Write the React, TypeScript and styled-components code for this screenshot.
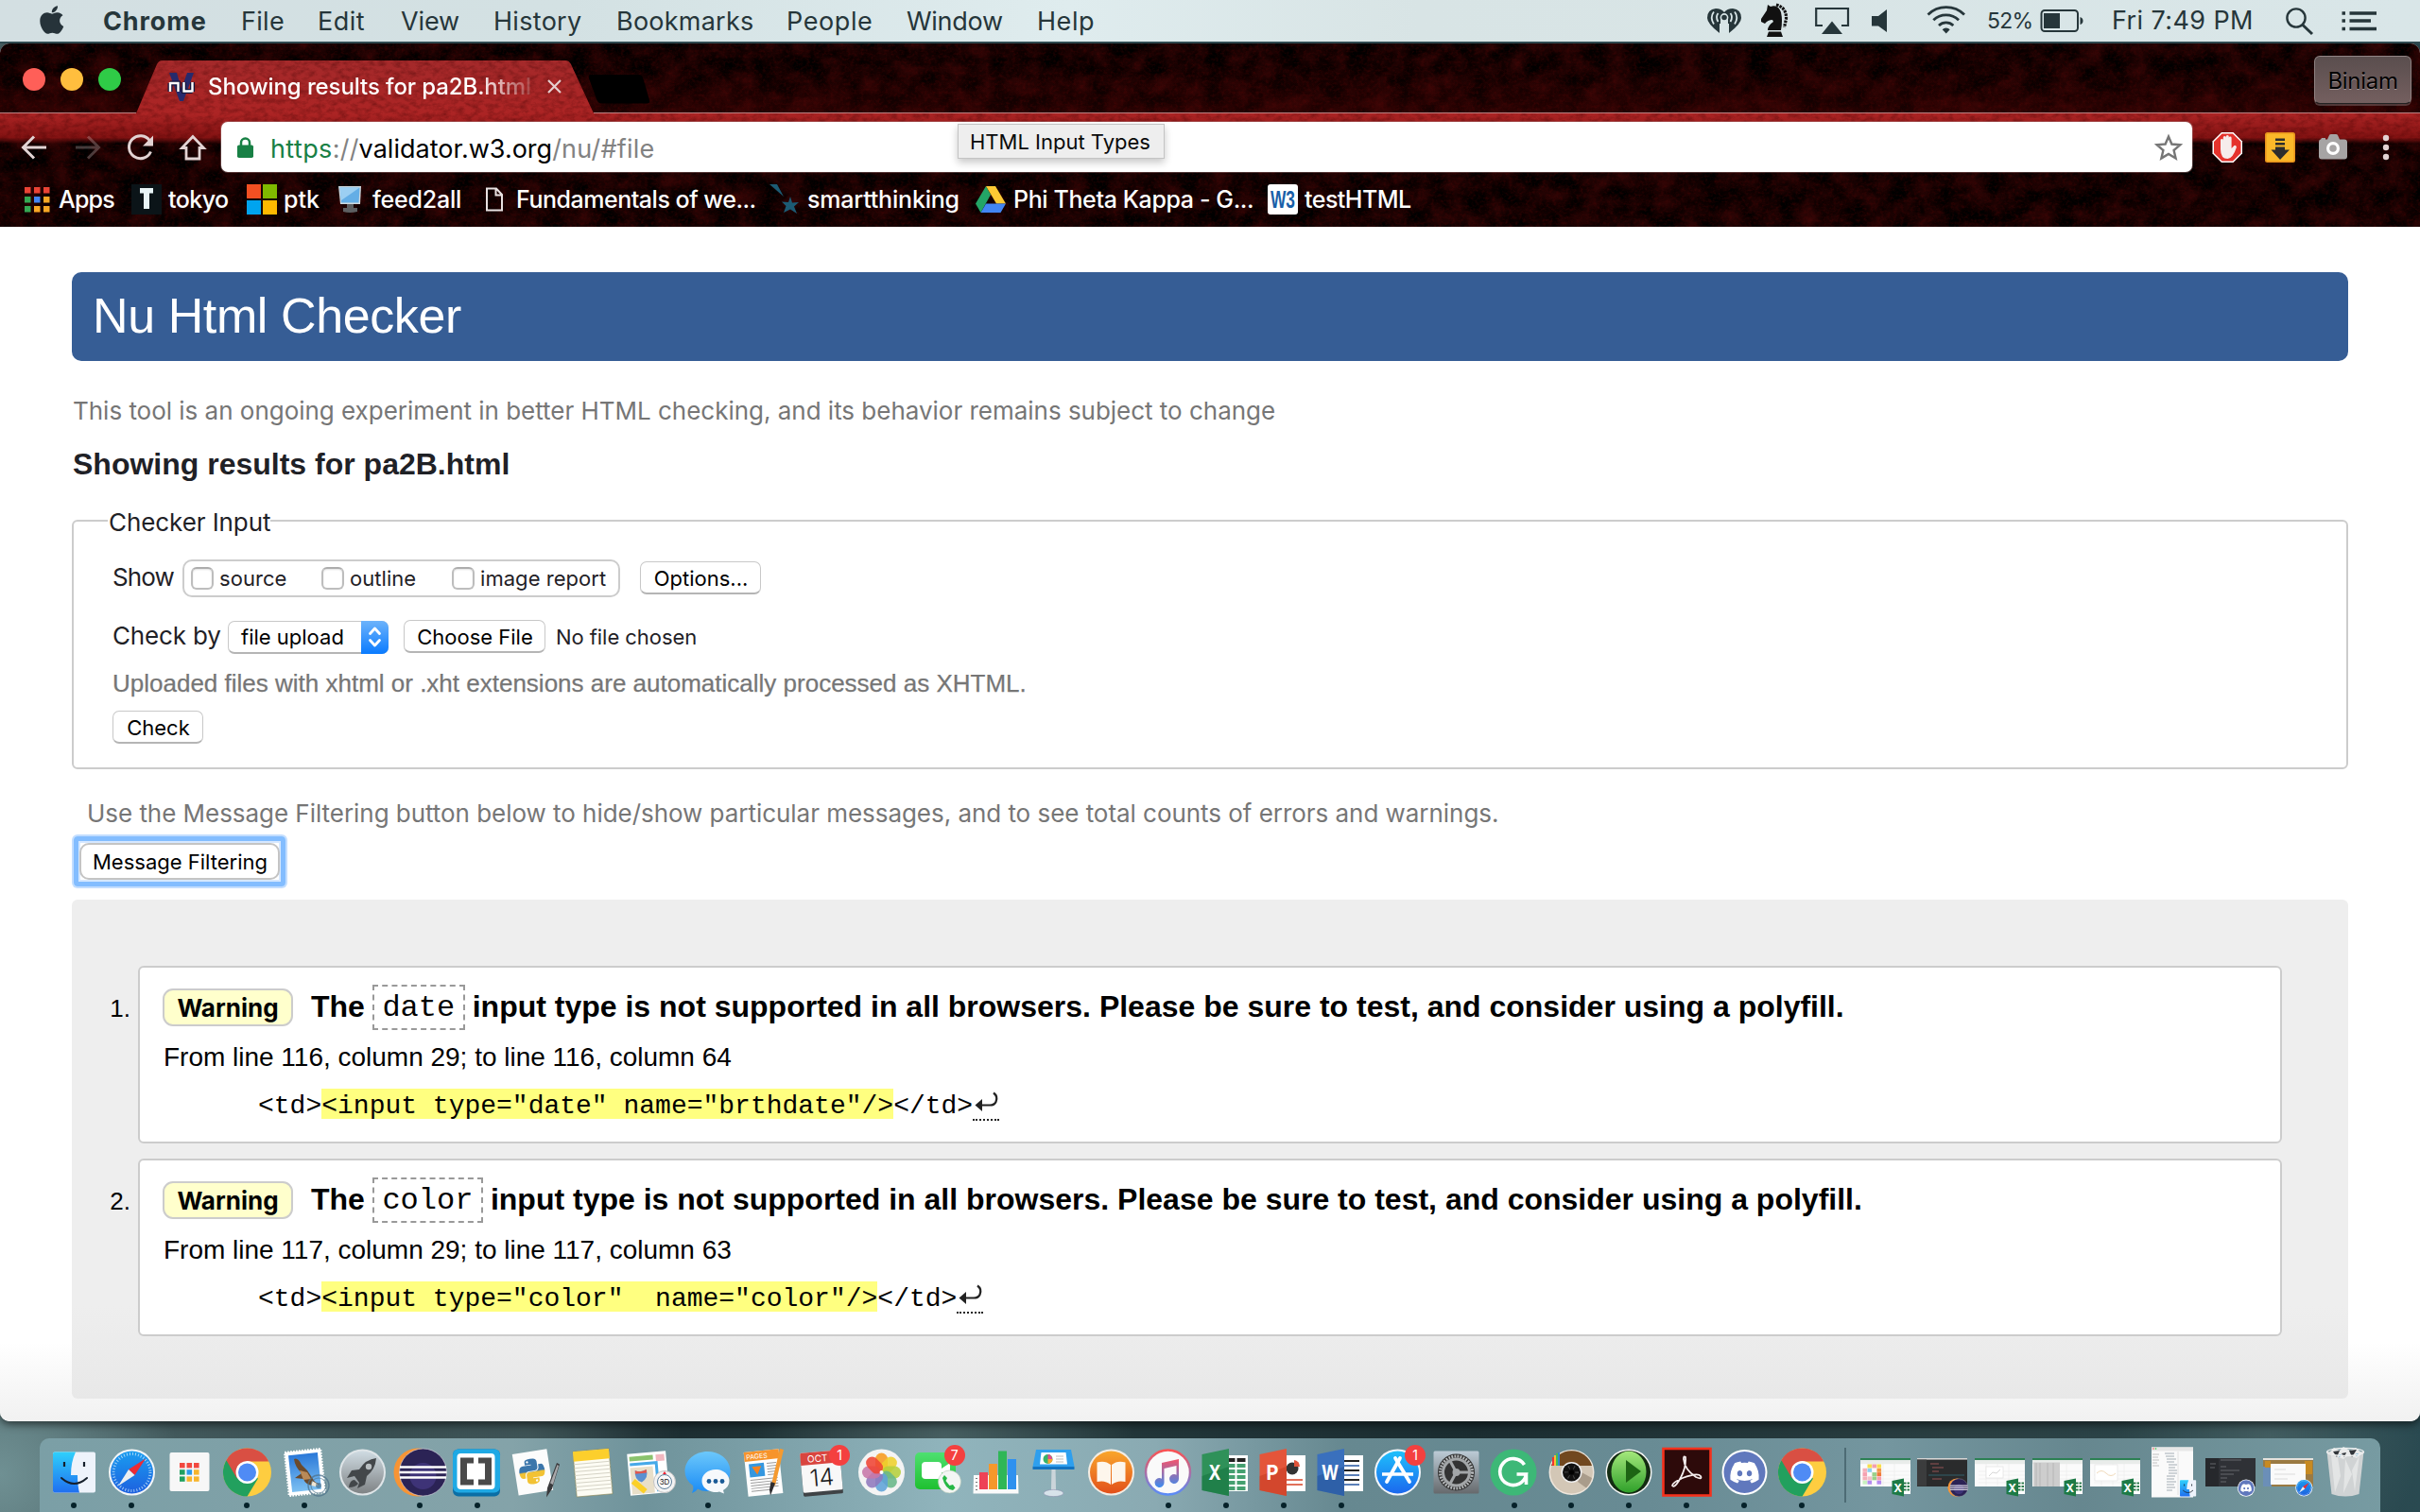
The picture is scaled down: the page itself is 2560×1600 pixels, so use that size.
import React from "react";
import styled, { createGlobalStyle, css } from "styled-components";
import { FaApple, FaDiscord, FaPython } from "react-icons/fa";

const UI = `Inter, "Noto Sans", sans-serif`;
const HELV = `"Liberation Sans", Arial, sans-serif`;
const MONO = `"Liberation Mono", "Courier New", monospace`;

const Global = createGlobalStyle`
  * { box-sizing: border-box; }
  html, body { margin: 0; padding: 0; }
  body { width: 2560px; height: 1600px; overflow: hidden; font-family: ${UI}; color: #1f2126; }
  svg { display: block; flex: none; overflow: visible; }
`;

const Desktop = styled.div`
  width: 2560px;
  height: 1600px;
  display: flex;
  flex-direction: column;
  background:
    radial-gradient(circle at 1000px 1520px, rgba(92, 118, 120, 0.6), transparent 200px),
    radial-gradient(circle at 560px 1520px, rgba(80, 104, 106, 0.5), transparent 160px),
    radial-gradient(circle at 0 1560px, #6f9093, transparent 190px),
    radial-gradient(circle at 2400px 1520px, rgba(90, 115, 116, 0.5), transparent 160px),
    linear-gradient(90deg, #4a6265 0, #34494c 500px, #1c2d31 680px, #263b3e 1000px, #1b2d31 1560px, #2b4043 2100px, #2a4a51 2560px);
`;

/* ---------- macOS menu bar ---------- */

const MenuBar = styled.header`
  height: 44px;
  margin-bottom: 2px;
  flex: none;
  display: flex;
  align-items: center;
  padding: 0 46px 0 42px;
  background: linear-gradient(90deg, #d3dfe2 0, #d3e1e3 600px, #dfecee 1130px, #d8e4e5 1500px, #d9e6e8 2560px);
  box-shadow: 0 2px 0 #2f4a50;
  color: #26363a;
  z-index: 1;
`;

const AppleMark = styled.div`
  width: 67px;
  padding-bottom: 3px;
  color: #26333a;
  flex: none;
`;

const MenuItem = styled.span<{ $w: number; $ls: number; $bold?: boolean }>`
  width: ${(p) => p.$w}px;
  flex: none;
  white-space: nowrap;
  font-size: 27px;
  line-height: 44px;
  padding-top: 1px;
  font-weight: ${(p) => (p.$bold ? 700 : 400)};
  letter-spacing: ${(p) => p.$ls}px;
`;

const StatusArea = styled.div`
  margin-left: auto;
  display: flex;
  align-items: center;
  height: 44px;
`;

const Status = styled.span<{ $gap: number; $w: number }>`
  margin-left: ${(p) => p.$gap}px;
  width: ${(p) => p.$w}px;
  flex: none;
  white-space: nowrap;
`;

const StatusText = styled(Status)<{ $size: number; $ls: number }>`
  font-size: ${(p) => p.$size}px;
  letter-spacing: ${(p) => p.$ls}px;
  line-height: 44px;
`;

/* ---------- browser window ---------- */

const Window = styled.div`
  height: 1458px;
  flex: none;
  display: flex;
  flex-direction: column;
  border-radius: 10px;
  overflow: hidden;
  position: relative;
  background: #fff;
  box-shadow: 0 3px 10px rgba(0, 0, 0, 0.6);
`;

const Chrome = styled.div`
  position: relative;
  height: 194px;
  flex: none;
  border-top: 1px solid #8d7f7f;
  border-bottom: 1px solid #6b5555;
  display: flex;
  flex-direction: column;
`;

const Texture = styled.svg`
  position: absolute;
  left: 0;
  top: -1px;
`;

const TabStrip = styled.div`
  position: relative;
  height: 73px;
  flex: none;
  display: flex;
  padding: 0 9px 0 24px;
`;

const Lights = styled.div`
  display: flex;
  gap: 16px;
  margin: 25px 50px 0 0;
`;

const Light = styled.i<{ $c: string }>`
  width: 24px;
  height: 24px;
  border-radius: 50%;
  background: ${(p) => p.$c};
`;

const Tab = styled.div`
  display: flex;
  align-items: center;
  height: 55px;
  margin-top: 17px;
  color: #fff;
`;

const Favicon = styled.div`
  width: 42px;
  flex: none;
`;

const TabTitle = styled.span`
  width: 348px;
  margin-right: 11px;
  overflow: hidden;
  white-space: nowrap;
  font-size: 24px;
  font-weight: 500;
  line-height: 54px;
  letter-spacing: -0.1px;
  mask-image: linear-gradient(90deg, #000 285px, rgba(0, 0, 0, 0.12) 345px);
`;

const NewTab = styled.div`
  margin: 32px 0 0 28px;
`;

const Profile = styled.div`
  margin: 12px 0 0 auto;
  width: 103px;
  height: 51px;
  border-radius: 6px;
  border: 1px solid rgba(160, 150, 150, 0.7);
  border-bottom-color: #222;
  background: linear-gradient(#5a4e4e, #745f5f);
  box-shadow: 0 2px 0 rgba(120, 110, 110, 0.5);
  color: #000;
  text-shadow: 0 1px 0 rgba(255, 255, 255, 0.4);
  font-size: 24px;
  letter-spacing: -0.3px;
  line-height: 51px;
  text-align: center;
`;

const Toolbar = styled.div`
  position: relative;
  height: 71px;
  flex: none;
  display: flex;
  align-items: center;
`;

const ToolIcon = styled.div<{ $gap: number; $w: number; $dim?: boolean }>`
  margin-left: ${(p) => p.$gap}px;
  width: ${(p) => p.$w}px;
  flex: none;
  opacity: ${(p) => (p.$dim ? 0.28 : 1)};
`;

const Omnibox = styled.div`
  margin-left: 14px;
  width: 2085px;
  height: 53px;
  border-radius: 7px;
  background: #fff;
  box-shadow: 0 0 0 1px rgba(170, 130, 130, 0.4);
  display: flex;
  align-items: center;
  padding: 0 10px 0 17px;
`;

const Url = styled.span`
  margin-left: 18px;
  flex: 1;
  display: flex;
  font-size: 27px;
  line-height: 53px;
  padding-top: 3px;
`;

const UrlPart = styled.span<{ $c?: string; $ls: number }>`
  color: ${(p) => p.$c || "#828282"};
  letter-spacing: ${(p) => p.$ls}px;
`;

const Bookmarks = styled.nav`
  position: relative;
  height: 48px;
  padding-bottom: 8px;
  display: flex;
  align-items: center;
  color: #fff;
`;

const Bookmark = styled.div<{ $gap: number; $w: number }>`
  margin-left: ${(p) => p.$gap}px;
  width: ${(p) => p.$w}px;
  flex: none;
  display: flex;
  align-items: center;
  justify-content: space-between;
`;

const BookmarkText = styled.span<{ $ls: number; $w: number }>`
  width: ${(p) => p.$w}px;
  font-size: 25px;
  font-weight: 500;
  line-height: 38px;
  white-space: nowrap;
  letter-spacing: ${(p) => p.$ls}px;
`;

const Tooltip = styled.div`
  position: absolute;
  left: 1013px;
  top: 85px;
  width: 219px;
  height: 37px;
  background: #eeeeee;
  border: 1px solid #c4c4c4;
  box-shadow: 0 4px 8px rgba(0, 0, 0, 0.22);
  color: #0a0a0a;
  font-size: 22px;
  line-height: 36px;
  padding-left: 12px;
  white-space: nowrap;
`;

/* ---------- validator page ---------- */

const Page = styled.main`
  flex: 1;
  padding: 48px 76px 0;
  background: linear-gradient(#fff 0, #fff 1180px, #f1f1f1 1264px);
  display: flex;
  flex-direction: column;
`;

const Banner = styled.h1`
  margin: 0;
  height: 94px;
  padding-left: 22px;
  border-radius: 10px;
  background: #365d95;
  color: #fff;
  font: 400 52px/93px ${HELV};
  letter-spacing: -0.4px;
`;

const Notice = styled.p`
  margin: 33px 0 0;
  padding-left: 1px;
  color: #767676;
  font-size: 26px;
  line-height: 40px;
  letter-spacing: -0.02px;
  white-space: nowrap;
`;

const ResultTitle = styled.h2`
  margin: 14px 0 0 1px;
  font: 700 32px/44px ${HELV};
`;

const InputSet = styled.fieldset`
  margin: 18px 0 0;
  min-width: 0;
  height: 283px;
  border: 2px solid #ccc;
  border-radius: 6px;
  padding: 21px 41px 0;
`;

const Legend = styled.legend`
  margin-left: -5px;
  padding: 3px 0 0 1px;
  font-size: 26px;
  line-height: 37px;
  letter-spacing: -0.08px;
`;

const Row = styled.div<{ $mt?: number }>`
  display: flex;
  align-items: flex-start;
  margin-top: ${(p) => p.$mt || 0}px;
`;

const RowLabel = styled.span<{ $w: number; $lh: number; $ls?: number }>`
  width: ${(p) => p.$w}px;
  flex: none;
  font-size: 26px;
  line-height: ${(p) => p.$lh}px;
  letter-spacing: ${(p) => p.$ls || 0}px;
  white-space: nowrap;
`;

const CheckGroup = styled.div`
  width: 463px;
  height: 40px;
  border: 2px solid #ccc;
  border-radius: 10px;
  display: flex;
  align-items: center;
  padding-left: 7px;
`;

const CheckLabel = styled.label`
  width: 138px;
  flex: none;
  display: flex;
  align-items: center;
  gap: 6px;
  font-size: 22px;
  line-height: 38px;
  letter-spacing: 0.05px;
  white-space: nowrap;
`;

const Box = styled.i`
  width: 24px;
  height: 24px;
  flex: none;
  border: 2px solid #bdbdbd;
  border-top-color: #adadad;
  border-radius: 6px;
  background: #fff;
  box-shadow: inset 0 1px 2px rgba(0, 0, 0, 0.12);
`;

const macButton = css`
  height: 35px;
  border: 1px solid #c8c8c8;
  border-bottom: 2px solid #b5b5b5;
  border-radius: 7px;
  background: #fff;
  color: #000;
  font-size: 22px;
  line-height: 34px;
  white-space: nowrap;
`;

const Button = styled.div<{ $w: number; $ml?: number; $mt?: number }>`
  ${macButton}
  width: ${(p) => p.$w}px;
  margin: ${(p) => p.$mt || 0}px 0 0 ${(p) => p.$ml || 0}px;
  padding-left: 1px;
  text-align: center;
`;

const Select = styled.div`
  ${macButton}
  width: 170px;
  margin-top: 1px;
  padding-left: 13px;
  line-height: 32px;
  display: flex;
  justify-content: space-between;
`;

const Stepper = styled.span`
  width: 29px;
  height: 35px;
  margin: -1px -1px -2px 0;
  border-radius: 0 7px 7px 0;
  background: linear-gradient(#6db3fb, #0a7bff);
`;

const NoFile = styled.span`
  margin-left: 11px;
  font-size: 22px;
  line-height: 36px;
  letter-spacing: -0.06px;
`;

const Hint = styled.p`
  margin: 13px 0 11px;
  color: #767676;
  font: 400 26px/36px ${HELV};
  -webkit-text-stroke: 0.25px #767676;
`;

const FilterHint = styled.p`
  margin: 27px 0 0 16px;
  color: #767676;
  font-size: 26px;
  line-height: 40px;
  letter-spacing: -0.04px;
  white-space: nowrap;
`;

const FocusRing = styled.div`
  width: 224px;
  height: 53px;
  flex: none;
  margin: 4px 0 14px 2px;
  border: 5px solid #83bdff;
  border-radius: 4px;
  box-shadow: 0 0 0 2px #c3deff, inset 0 0 0 2px #d6e8ff;
  display: flex;
  align-items: center;
  justify-content: center;
`;

const FilterButton = styled.div`
  ${macButton}
  width: 212px;
  height: 39px;
  border: 2px solid #c4c4c4;
  border-radius: 10px;
  line-height: 37px;
  padding-left: 1px;
  text-align: center;
`;

const Results = styled.ol`
  list-style: none;
  margin: 0;
  height: 528px;
  flex: none;
  border-radius: 6px;
  background: linear-gradient(#eee 430px, #e8e8e8);
  padding: 70px 70px 0 0;
  display: flex;
  flex-direction: column;
  gap: 16px;
`;

const ResultItem = styled.li`
  display: flex;
  color: #000;
`;

const Num = styled.span`
  width: 70px;
  flex: none;
  padding-right: 8px;
  text-align: right;
  font: 400 26px/91px ${HELV};
`;

const Card = styled.div`
  flex: 1;
  height: 188px;
  border: 2px solid #ccc;
  border-radius: 6px;
  background: #fff;
  padding: 18px 24px 0;
`;

const TitleRow = styled.div`
  display: flex;
  height: 47px;
  font: 700 32px/46px ${HELV};
  white-space: nowrap;
`;

const Badge = styled.span`
  width: 138px;
  height: 40px;
  margin: 4px 19px 0 0;
  border: 2px solid #ccc;
  border-radius: 11px;
  background: #ffffcc;
  font: 700 26px/37px ${UI};
  text-align: center;
`;

const CodeBox = styled.code`
  margin: 0 8px 0 8px;
  height: 48px;
  border: 2px dashed #999;
  padding: 0 8.5px;
  font: 400 32px/46px ${MONO};
`;

const TitleRest = styled.span`
  letter-spacing: 0;
`;

const Location = styled.p`
  margin: 11px 0 0 1px;
  font: 400 28px/37px ${HELV};
  letter-spacing: -0.01px;
`;

const Extract = styled.pre`
  margin: 15px 0 0 101px;
  height: 34px;
  display: flex;
  font: 400 28px/37px ${MONO};
`;

const Mark = styled.mark`
  height: 32px;
  background: #ffff80;
  color: #000;
`;

const Newline = styled.span`
  width: 28px;
  height: 34px;
  border-bottom: 2px dotted #222;
  padding-top: 3px;
`;

/* ---------- dock ---------- */

const Dock = styled.footer`
  width: 2476px;
  height: 78px;
  margin: 18px 0 0 42px;
  flex: none;
  padding-left: 6px;
  border-radius: 10px 10px 0 0;
  display: flex;
  background: linear-gradient(90deg, #7b9fa6 0, #84a3a9 500px, #6f939b 640px, #90b4bc 960px, #8aaab2 1180px, #668890 1380px, #688b94 1700px, #74969f 1950px, #66878f 2160px, #779ba2 2476px);
`;

const Slot = styled.div`
  position: relative;
  width: 60.93px;
  flex: none;
  display: flex;
  flex-direction: column;
  align-items: center;
`;

const Running = styled.i`
  width: 6px;
  height: 6px;
  border-radius: 50%;
  background: #06222a;
  margin-top: 6px;
`;

const Count = styled.span`
  position: absolute;
  left: 37px;
  top: 7px;
  width: 22px;
  height: 22px;
  border-radius: 50%;
  background: #f4403f;
  color: #fff;
  font-size: 14px;
  line-height: 22px;
  text-align: center;
`;

const Divider = styled.i`
  width: 2px;
  height: 58px;
  margin: 10px 11px 0 14px;
  background: #4d6c75;
`;

/* ---------- drawings ---------- */

const petals = ["#f79a1e", "#eed02b", "#b5cf3c", "#68b789", "#5fa3d8", "#8f79bd", "#c777a8", "#ef4434"];

const Office = ({ color, dark, letter, children }: any) => (
  <g>
    <rect x="28" y="18" width="26" height="38" fill="#fff" />
    {children}
    <path d="M5.500 17L34 11v50L5.500 55z" fill={color} />
    <path d="M5.500 40L34 30v31L5.500 55z" fill={dark} opacity=".5" />
    <text x="19" y="44" fill="#fff" fontFamily={UI} fontWeight="700" fontSize="22" textAnchor="middle" textLength={letter === "W" ? 18 : 13} lengthAdjust="spacingAndGlyphs">{letter}</text>
  </g>
);

const ChromeLogo = () => (
  <g>
    <circle cx="30.500" cy="36" r="25.500" fill="#fecd40" />
    <path d="M30.500 36L8.400 23.200A25.500 25.500 0 0 0 30.500 61.500L42 42.500z" fill="#22a05e" />
    <path d="M8.400 23.200A25.500 25.500 0 0 1 52.600 23.200L53 24.500H30.500L19.500 42.300z" fill="#d94f43" />
    <circle cx="30.500" cy="36" r="12" fill="#fff" />
    <circle cx="30.500" cy="36" r="9.500" fill="#4f8bf5" />
  </g>
);

const FinderLogo = () => (
  <g>
    <rect x="8" y="14.500" width="45" height="43" rx="2" fill="#eef3fb" />
    <path d="M10 14.500H32Q27 25 27 39H34Q34 50 36 57.500H10Q8 57.500 8 55.500V16.500Q8 14.500 10 14.500z" fill="url(#gFinder)" />
    <path d="M20 25v5M41 25v5" stroke="#16202c" strokeWidth="2.200" />
    <path d="M17 42Q30.500 54 44 42" fill="none" stroke="#16202c" strokeWidth="2" strokeLinecap="round" />
  </g>
);

const SafariLogo = () => (
  <g>
    <circle cx="30.500" cy="36" r="24.500" fill="#f3f6f8" />
    <circle cx="30.500" cy="36" r="22.500" fill="url(#gSafari)" />
    <circle cx="30.500" cy="36" r="19.500" fill="none" stroke="#cfeafa" strokeWidth="3" strokeDasharray="1 2.060" opacity=".75" />
    <path d="M45 21.500L27 33l6.500 6z" fill="#ec2b35" />
    <path d="M16 50.500L27 33l6.500 6z" fill="#eceff1" />
  </g>
);

const EclipseLogo = () => (
  <g>
    <circle cx="28" cy="36" r="25.500" fill="#f79434" />
    <circle cx="33.500" cy="36" r="25" fill="#2b2355" stroke="#dfd9e6" strokeWidth=".6" />
    <circle cx="33.500" cy="40" r="14" fill="#473a86" opacity=".7" />
    <path d="M9 30.500h49M8.500 36h50M9 41.500h49" stroke="#fff" strokeWidth="2.600" />
  </g>
);

const DiscordLogo = () => (
  <g>
    <circle cx="30.500" cy="36" r="24" fill="#fff" />
    <circle cx="30.500" cy="36" r="22" fill="#6078bd" />
    <FaDiscord x={14} y={19.5} size={33} color="#fff" />
  </g>
);

type Ico = { d: React.ReactNode; run?: boolean; count?: number };

const dockIcons: Ico[] = [
  { run: true, d: <FinderLogo /> },
  { run: true, d: <SafariLogo /> },
  {
    d: (
      <g>
        <rect x="9.500" y="15" width="42" height="41" rx="2" fill="#f7f7f7" />
        {["#f2483f", "#f2483f", "#f2483f", "#1fa05f", "#2c9be8", "#f7b52c", "#1fa05f", "#f7b52c", "#f7b52c"].map((c, i) => (
          <rect key={i} x={20 + (i % 3) * 7.500} y={26 + Math.floor(i / 3) * 7.200} width="5.600" height="5.400" fill={c} />
        ))}
      </g>
    ),
  },
  { run: true, d: <ChromeLogo /> },
  {
    run: true,
    d: (
      <g>
        <g transform="rotate(-6 30.500 36)">
          <rect x="11.500" y="13" width="38" height="46" fill="#fff" />
          <rect x="11.500" y="13" width="38" height="46" fill="none" stroke="#fff" strokeWidth="2.500" strokeDasharray="1.600 1.400" />
          <rect x="15" y="16.500" width="31" height="39" fill="url(#gSky)" />
        </g>
        <path d="M19 22Q23 20 27 28L33 34L41 46L46 49L39 50Q31 49 29 43L20 42L27 37Q20 30 19 22z" fill="#6b4a2c" />
        <path d="M25 34l8 2 4 7-8 1z" fill="#b98a58" />
        <path d="M38 45l7 4-3 2-5-1z" fill="#f0e6d4" />
        <circle cx="45" cy="50" r="11" fill="none" stroke="#4d7189" strokeWidth="1.400" opacity=".75" />
        <circle cx="45" cy="50" r="8" fill="none" stroke="#4d7189" strokeWidth="1.200" opacity=".6" />
        <circle cx="45" cy="50" r="3" fill="#3d637c" opacity=".6" />
      </g>
    ),
  },
  {
    d: (
      <g>
        <circle cx="30.500" cy="36" r="24.500" fill="#dfe5e8" />
        <circle cx="30.500" cy="36" r="22.500" fill="url(#gSilver)" />
        <path d="M45 21Q34 22 27 33L19 34L14 42L22 40L27 47L25 53L33 49L35 40Q44 33 45 21z" fill="#43474a" />
        <circle cx="37" cy="30" r="3.200" fill="#b9bfc2" />
        <path d="M22 44Q17 44 16 52Q23 52 26 48z" fill="#43474a" />
      </g>
    ),
  },
  { run: true, d: <EclipseLogo /> },
  {
    run: true,
    d: (
      <g>
        <rect x="5" y="11.500" width="50" height="50" rx="6" fill="#0b6ea5" />
        <rect x="5" y="11.500" width="50" height="46" rx="6" fill="#1fa9e4" />
        <rect x="9.500" y="16" width="40" height="38" rx="4" fill="#fff" />
        <path d="M13 20.500h14v6h-7v17h7v6H13zM46 20.500H32v6h7v17h-7v6h14z" fill="#4a4a4a" />
      </g>
    ),
  },
  {
    d: (
      <g>
        <g transform="rotate(-9 28 36)">
          <rect x="10" y="14" width="37" height="44" fill="#fcfcfc" />
          <FaPython x={12.5} y={19.5} size={31} fill="url(#gPy)" />
        </g>
        <path d="M54 26l3 1.500-8 26-6 9 1-10z" fill="#3a3a3c" />
        <path d="M54.500 28l1.500 1-6 20-3-1.500z" fill="#a8a8aa" />
      </g>
    ),
  },
  {
    d: (
      <g transform="rotate(-5 30.500 36)">
        <rect x="12" y="12.500" width="38" height="48" fill="#fdfcf4" stroke="#8d8450" strokeWidth=".6" />
        <path d="M12 26h38M12 30h38M12 34h38M12 38h38M12 42h38M12 46h38M12 50h38M12 54h38" stroke="#d5d3c6" strokeWidth="1" />
        <rect x="12" y="12.500" width="38" height="10.500" fill="#fccf2c" />
      </g>
    ),
  },
  {
    d: (
      <g>
        <g transform="rotate(-5 28 36)">
          <rect x="8" y="15" width="41" height="44" fill="#fff" />
          <rect x="10" y="18" width="25" height="5" fill="#8bc36d" />
          <rect x="38" y="18" width="9" height="7" fill="#f2b8c0" />
          <rect x="10" y="30" width="24" height="28" fill="#e8dfc9" />
          <path d="M10 26.500H38V57" fill="none" stroke="#46a9e8" strokeWidth="3" />
          <path d="M12 44L24 56" stroke="#fbd028" strokeWidth="6" />
          <path d="M15 33q6 3 12 0q2 9-6 13q-8-4-6-13z" fill="#5b90d0" />
          <path d="M15 33q6 3 12 0v3.500h-12z" fill="#e2574c" />
        </g>
        <circle cx="46" cy="46" r="11.500" fill="#f3f3f3" stroke="#c2c2c2" />
        <circle cx="46" cy="46" r="7.500" fill="#fafafa" stroke="#5c7f9b" strokeWidth="1" />
        <text x="46" y="49" fontSize="8" fontFamily={UI} textAnchor="middle" fill="#222">3D</text>
        <path d="M46 35l-2 3h4z" fill="#e23" />
      </g>
    ),
  },
  {
    run: true,
    d: (
      <g>
        <path d="M30.500 14C44 14 54.500 23 54.500 35S44 56 30.500 56Q24 56 20 53.500Q18 57 14 58Q16 54 15 50Q6.500 44 6.500 35C6.500 23 17 14 30.500 14z" fill="url(#gMsg)" />
        <path d="M39 33C47 33 53.500 38 53.500 45Q53.500 51 47 55L48 58.500L43 56.500Q39 57.500 35 56.500C29 55 24.500 51 24.500 45C24.500 38 31 33 39 33z" fill="#f6f9fc" />
        <circle cx="32" cy="45.500" r="2.400" fill="#1b5b97" /><circle cx="39" cy="45.500" r="2.400" fill="#1b5b97" /><circle cx="46" cy="45.500" r="2.400" fill="#1b5b97" />
      </g>
    ),
  },
  {
    d: (
      <g>
        <g transform="rotate(-6 28 36)">
          <rect x="10" y="13" width="37" height="47" fill="#fdfdfd" />
          <rect x="10" y="13" width="37" height="10" fill="#f7942b" />
          <text x="12" y="21" fontSize="7" fontFamily={UI} fill="#fff">PAGES</text>
          <rect x="14" y="26" width="16" height="14" fill="#3497e0" />
          <path d="M17 29h10l-5 9z" fill="#f58220" />
          <path d="M33 27h10M33 30h10M33 33h10M33 36h10M33 39h10M14 43h29M14 46h29M14 49h29M14 52h29M14 55h20" stroke="#9a9a9a" strokeWidth="1" />
        </g>
        <path d="M46 11l4 1-9 38-4-1z" fill="#f59a2f" /><path d="M36.500 46l4.500 1.500-3 8-2 5-1-6z" fill="#2d2d30" />
      </g>
    ),
  },
  {
    count: 1,
    d: (
      <g transform="rotate(-5 30 36)">
        <rect x="8" y="16" width="42" height="44" rx="1.500" fill="#3f4346" />
        <rect x="8" y="14" width="42" height="42" rx="1.500" fill="#f8f8f8" />
        <path d="M9.500 14h39q1.500 0 1.500 1.500V27H8V15.500Q8 14 9.500 14z" fill="#d9453f" />
        <text x="26" y="24.500" fontSize="10" fontFamily={UI} fill="#fff" textAnchor="middle">OCT</text>
        <text x="29" y="50" fontSize="25" fontFamily={UI} fontWeight="300" fill="#1b1b1b" textAnchor="middle">14</text>
      </g>
    ),
  },
  {
    d: (
      <g>
        <circle cx="31.500" cy="36" r="24.500" fill="#f4f4f4" />
        {petals.map((c, i) => (
          <rect key={i} x="25" y="15.500" width="13" height="20" rx="6.500" fill={c} opacity=".88" transform={`rotate(${i * 45} 31.500 36)`} />
        ))}
        <circle cx="31.500" cy="36" r="2" fill="#fff" />
      </g>
    ),
  },
  {
    count: 7,
    d: (
      <g>
        <rect x="6" y="15" width="43" height="39" rx="5" fill="url(#gGreen)" />
        <rect x="13" y="25" width="21" height="18" rx="4" fill="#fff" />
        <path d="M34 32l9-6v16l-9-6z" fill="#fff" />
        <circle cx="42.500" cy="46" r="12" fill="#f4f6f4" stroke="#b4c6b4" strokeWidth=".6" />
        <path d="M37 39l3 3-1.500 3 4 5 3.500-1 2.500 3.500-2.500 2.500Q38 54 35 42z" fill="#27b846" />
      </g>
    ),
  },
  {
    d: (
      <g>
        <path d="M7 39h47l.5 19.500H6.500z" fill="#fafafa" />
        <path d="M10 42v1M10 46v1M10 50v1M10 54v1" stroke="#777" strokeWidth="2" />
        <rect x="13" y="36" width="9" height="18" fill="#ee4256" /><rect x="23" y="27" width="9" height="27" fill="#f6982b" />
        <rect x="33" y="13.500" width="9" height="40.500" fill="#2fb757" /><rect x="43" y="22" width="9" height="32" fill="#2f91ef" />
      </g>
    ),
  },
  {
    d: (
      <g>
        <path d="M28.500 30h4l.6 28h-5.200z" fill="#cbd5da" />
        <ellipse cx="30.500" cy="58" rx="10.500" ry="3.600" fill="#d7e3ea" stroke="#88a" strokeWidth=".5" />
        <path d="M12 12h37l3.500 18h-44z" fill="#2e9fee" /><path d="M8.500 30h44v3h-44z" fill="#1373c0" />
        <path d="M17.500 15h26l1.500 12.500H16z" fill="#fff" />
        <circle cx="24.500" cy="22" r="5" fill="#37b36b" /><path d="M24.500 22v-5a5 5 0 0 1 4.500 6z" fill="#e84b8a" /><path d="M24.500 22h5a5 5 0 0 1-5 5z" fill="#f7a531" />
        <path d="M33 19h8M33 22h8M33 25h8" stroke="#bbb" strokeWidth="1" />
      </g>
    ),
  },
  {
    d: (
      <g>
        <circle cx="30.500" cy="36" r="24.500" fill="#f4ede4" /><circle cx="30.500" cy="36" r="22.500" fill="url(#gOrange)" />
        <path d="M30 28Q24 23 15.500 25.500V46Q24 44 30 49zM31 28Q37 23 45.500 25.500V46Q37 44 31 49z" fill="#fdf6ec" />
      </g>
    ),
  },
  {
    run: true,
    d: (
      <g>
        <circle cx="30.500" cy="36" r="23.500" fill="#fafafa" stroke="url(#gTunes)" strokeWidth="2.500" />
        <path d="M24 26L42 22V43a5 5 0 1 1-2.500-4.300V29L26.500 32V47a5 5 0 1 1-2.500-4.300z" fill="url(#gTunes2)" />
      </g>
    ),
  },
  {
    run: true,
    d: (
      <Office color="#2f9159" dark="#11703b" letter="X">
        {[0, 1, 2, 3, 4, 5].map((r) => (
          <path key={r} d={`M34 ${23 + r * 6}h6.500m2 0h9`} stroke={r ? "#45a070" : "#222"} strokeWidth="4" />
        ))}
      </Office>
    ),
  },
  {
    run: true,
    d: (
      <Office color="#e4553a" dark="#c23a20" letter="P">
        <circle cx="40" cy="32" r="6.500" fill="#333" /><path d="M42 30v-7a7 7 0 0 1 6 7z" fill="#e0543a" />
        <path d="M34 44h17M34 49h17" stroke="#e0705a" strokeWidth="2" />
      </Office>
    ),
  },
  {
    run: true,
    d: (
      <Office color="#3a70bd" dark="#214f93" letter="W">
        <path d="M34 24h16M34 34h16M34 44h16" stroke="#222" strokeWidth="1.800" /><path d="M34 29h16M34 39h16M34 49h16" stroke="#5a7fb8" strokeWidth="1.800" />
      </Office>
    ),
  },
  {
    count: 1,
    d: (
      <g>
        <circle cx="29.500" cy="36" r="24.500" fill="#f3f6fa" /><circle cx="29.500" cy="36" r="22.500" fill="url(#gStore)" />
        <path d="M32 21L18 46" stroke="#fff" strokeWidth="3.800" strokeLinecap="round" /><path d="M27 21L42 46" stroke="#fff" strokeWidth="3.800" strokeLinecap="round" /><path d="M13 38H46" stroke="#fff" strokeWidth="3.400" />
      </g>
    ),
  },
  {
    d: (
      <g>
        <rect x="6.500" y="13.500" width="48" height="45" rx="1.500" fill="url(#gPref)" />
        <circle cx="30.500" cy="36" r="19.500" fill="#333" /><circle cx="30.500" cy="36" r="17" fill="none" stroke="#b5b8ba" strokeWidth="3" strokeDasharray="1.800 1.300" />
        <circle cx="30.500" cy="36" r="14" fill="none" stroke="#a3a6a8" strokeWidth="3" />
        <path d="M30.500 36L24 24M30.500 36L24 48M30.500 36H44" stroke="#a3a6a8" strokeWidth="3" /><circle cx="30.500" cy="36" r="4" fill="#a3a6a8" />
      </g>
    ),
  },
  {
    run: true,
    d: (
      <g>
        <circle cx="30" cy="36" r="24.500" fill="#3db877" />
        <path d="M41.500 28A14 14 0 1 0 43.500 38H33.500M43.500 37v12" fill="none" stroke="#fff" strokeWidth="3.600" />
      </g>
    ),
  },
  {
    run: true,
    d: (
      <g>
        <circle cx="30.500" cy="36" r="24" fill="#eee6dc" /><circle cx="30.500" cy="36" r="22.500" fill="#d3c7b6" />
        <path d="M9 29A22.500 22.500 0 0 1 52 29z" fill="#71481f" />
        <path d="M37 46L46 52.500A22.500 22.500 0 0 0 52 42L41 36z" fill="#a99c8b" />
        <path d="M11 20v9" stroke="#e33" strokeWidth="2" /><path d="M13 18v11" stroke="#fb3" strokeWidth="2" /><path d="M15 16v13" stroke="#4b5" strokeWidth="2" /><path d="M17 15v14" stroke="#38c" strokeWidth="2" />
        <circle cx="30.500" cy="36" r="11" fill="#efefef" /><circle cx="30.500" cy="36" r="9.500" fill="#111" />
        <circle cx="30.500" cy="36" r="5.500" fill="none" stroke="#444" strokeWidth="4" strokeDasharray="1 4.500" /><circle cx="30.500" cy="36" r="2.500" fill="#000" />
      </g>
    ),
  },
  {
    run: true,
    d: (
      <g>
        <circle cx="30" cy="36" r="24.500" fill="#f5f5f5" /><circle cx="30" cy="36" r="23" fill="#132c12" /><ellipse cx="30" cy="35.500" rx="18.500" ry="22" fill="url(#gCam)" />
        <path d="M27 23L43 35L27 47z" fill="#1d6414" />
      </g>
    ),
  },
  {
    run: true,
    d: (
      <g>
        <rect x="5.500" y="11" width="50" height="49.500" fill="#2d0a0a" stroke="#f5311c" strokeWidth="2.600" />
        <path d="M29 20Q27 18 27 22Q28 33 40 41Q47 44 45 40Q42 36 26 42Q15 47 15 50Q17 53 22 45Q30 32 29 20z" fill="none" stroke="#f5eeee" strokeWidth="1.800" />
      </g>
    ),
  },
  { run: true, d: <DiscordLogo /> },
  { run: true, d: <ChromeLogo /> },
];

const MiniExcel = () => (
  <g>
    <rect x="46" y="45" width="11" height="14" fill="#fff" />
    <path d="M50 47.500h6M50 51h6M50 54.500h6" stroke="#2c7a4c" strokeWidth="2" strokeDasharray="2.500 1" />
    <path d="M37.500 45L50 42.500v19L37.500 59z" fill="#1d7a45" />
    <text x="43.700" y="56.500" fontSize="12" fontWeight="700" fontFamily={UI} fill="#fff" textAnchor="middle">X</text>
  </g>
);

const Sheet = ({ children }: { children?: React.ReactNode }) => (
  <g>
    <rect x="4" y="21" width="53" height="30" fill="#fbfbfb" />
    <rect x="4" y="21" width="53" height="2.200" fill="#2c8053" />
    <rect x="4" y="23.200" width="53" height="4" fill="#e9ecea" />
    <path d="M8 35h49M8 39h49M8 43h49M8 47h49M16 27v24M28 27v24M40 27v24" stroke="#e6e6e6" strokeWidth=".5" />
    {children}
    <MiniExcel />
  </g>
);

const blocks = ["#fbfbfb", "#f7e04a", "#f3a0ae", "#f7e04a", "#f6b0b8", "#8fd0f0", "#fbfbfb", "#f29a4a", "#f6a0b0", "#fbfbfb", "#9ad08a", "#f07a3a", "#f6b0b8", "#f6c0c8", "#9ad08a", "#f6a0b0", "#c9f0c0", "#b58af0", "#fbfbfb", "#b58af0"];

const thumbs: React.ReactNode[] = [
  <Sheet>{blocks.map((c, i) => <rect key={i} x={6.500 + (i % 4) * 5} y={27.500 + Math.floor(i / 4) * 4.300} width="4.600" height="4" fill={c} />)}</Sheet>,
  <g>
    <rect x="4" y="21" width="53" height="30" fill="#2a2b2c" />
    <rect x="4" y="21" width="53" height="1.600" fill="#d5d5d5" />
    <rect x="4" y="22.600" width="10" height="28" fill="#3b3c3d" />
    <path d="M18 27h9M20 31h12M20 35h7M20 43h10" stroke="#a05a5a" strokeWidth=".9" /><path d="M16 39h38" stroke="#31606a" strokeWidth="1" />
    <g transform="translate(35.500 38.500) scale(.38)"><EclipseLogo /></g>
  </g>,
  <Sheet><rect x="16" y="30" width="18" height="12" fill="#fff" stroke="#ddd" strokeWidth=".6" /><path d="M19 40l4-4 4 1 4-4" stroke="#bbb" fill="none" strokeWidth=".6" /></Sheet>,
  <Sheet><rect x="5" y="25.500" width="28" height="25.500" fill="#cdcdcd" /><path d="M8 26v25M12 26v25M20 26v25M26 26v25" stroke="#b0b0b0" strokeWidth=".8" /></Sheet>,
  <Sheet><rect x="9" y="28" width="24" height="17" fill="#fff" stroke="#e2e2e2" strokeWidth=".6" /><path d="M11 37q5-5 10 0t10 0" stroke="#ecd0a8" fill="none" strokeWidth=".8" /></Sheet>,
  <g>
    <rect x="8" y="9.500" width="44" height="53" fill="#fafafa" />
    <rect x="8" y="9.500" width="44" height="4" fill="#e7e7e7" />
    <circle cx="10" cy="11" r=".8" fill="#f55" /><circle cx="12.500" cy="11" r=".8" fill="#3c4" />
    <path d="M9 17h7M9 20h6M9 23h7M9 26h5M9 29h7" stroke="#bbb" strokeWidth=".9" />
    <path d="M22 16h10M23 19h9M24 22h10M24 25h8M26 28h9M26 31h7M26 34h9M26 37h9M24 40h9M24 43h8M24 46h10M24 49h8M24 52h9M24 55h6" stroke="#9aa5ad" strokeWidth=".9" />
    <path d="M36 14v46" stroke="#ddd" strokeWidth=".8" />
    <g transform="translate(35 38.500) scale(.38 .4)"><FinderLogo /></g>
  </g>,
  <g>
    <rect x="4" y="21" width="53" height="30" fill="#2f3136" /><rect x="4" y="21" width="14" height="30" fill="#26282c" />
    <path d="M20 23h22M9 27h6M9 31h5M20 30h6M20 34h20M20 38h14M20 42h7M20 46h6" stroke="#73767c" strokeWidth=".8" />
    <g transform="translate(35.500 39) scale(.38)"><DiscordLogo /></g>
  </g>,
  <g>
    <rect x="4" y="21" width="53" height="30" fill="#9b7a42" /><path d="M4 30h9v21H4z" fill="#6b8fb8" /><path d="M6 24h6v7H6zM48 24h8v14h-8z" fill="#c78a22" />
    <rect x="4" y="21" width="53" height="2" fill="#e5e2dd" />
    <rect x="12" y="27" width="37" height="22" fill="#fafafa" /><path d="M16 33h12M16 38h22M16 43h14" stroke="#dcdcdc" strokeWidth="1" />
    <g transform="translate(36 39) scale(.37)"><SafariLogo /></g>
  </g>,
  <g>
    <path d="M10.500 14L15.500 59Q30 64 44.500 59L49.500 14z" fill="#d0d3d4" />
    <path d="M15 18L19 57L25 40L22 20zM30 22l-2 36 9-20zM45 18l-5 38-3-22z" fill="#e6e7e7" opacity=".85" />
    <path d="M13 15L18 10L24 13L28 9L35 13L41 10L48 16L42 21L33 18L28 22L20 19z" fill="#e9eaea" />
    <path d="M17 14l4 6 3-7zM34 13l3 7 5-8zM26 16l3 4 2-5z" fill="#31353a" />
    <path d="M22 18l2 2 2-3zM40 17l2 2 2-3z" fill="#4b9bc8" />
    <ellipse cx="30" cy="14.500" rx="19.500" ry="4" fill="none" stroke="#eef0f0" strokeWidth="1.300" />
  </g>,
];

const Gradient = ({ id, a, b, mid }: { id: string; a: string; b: string; mid?: boolean }) => (
  <linearGradient id={id} x1="0" y1="0" x2="0" y2="1">
    <stop offset={mid ? 0.48 : 0} stopColor={a} />
    <stop offset={mid ? 0.54 : 1} stopColor={b} />
  </linearGradient>
);

const ThemeTexture = () => (
  <Texture width="2560" height="194" viewBox="0 46 2560 194">
    <defs>
      <filter id="grain" x="0" y="0" width="100%" height="100%" colorInterpolationFilters="sRGB">
        <feTurbulence type="fractalNoise" baseFrequency="0.04 0.05" numOctaves="6" seed="4" />
        <feColorMatrix values="0.32 0 0 0 -0.085  0.04 0 0 0 -0.016  0.04 0 0 0 -0.016  0 0 0 0 1" />
      </filter>
      <filter id="speck" x="0" y="0" width="100%" height="100%" colorInterpolationFilters="sRGB">
        <feTurbulence type="fractalNoise" baseFrequency="0.28 0.34" numOctaves="3" seed="12" />
        <feColorMatrix values="0 0 0 0 0.32  0 0 0 0 0.02  0 0 0 0 0.02  1.5 0 0 0 -0.66" />
      </filter>
      <filter id="shade" x="0" y="0" width="100%" height="100%" colorInterpolationFilters="sRGB">
        <feTurbulence type="fractalNoise" baseFrequency="0.12 0.2" numOctaves="5" seed="9" />
        <feColorMatrix values="0 0 0 0 0.22  0 0 0 0 0  0 0 0 0 0  1.6 0 0 0 -0.62" />
      </filter>
      <linearGradient id="band" gradientUnits="userSpaceOnUse" x1="0" y1="60" x2="0" y2="152">
        <stop offset="0" stopColor="#a42a2b" />
        <stop offset=".66" stopColor="#ac2424" />
        <stop offset=".93" stopColor="#821212" />
        <stop offset="1" stopColor="#821212" stopOpacity="0" />
      </linearGradient>
      <linearGradient id="glow" gradientUnits="userSpaceOnUse" x1="0" y1="70" x2="0" y2="120">
        <stop offset="0" stopColor="#6a0606" stopOpacity="0" />
        <stop offset="1" stopColor="#6a0606" stopOpacity=".25" />
      </linearGradient>
      <clipPath id="redShape">
        <path d="M0 120H144L166 68Q168 64 172 64H598Q602 64 604 68L628 120H2560V154H0z" />
      </clipPath>
    </defs>
    <rect y="46" width="2560" height="194" filter="url(#grain)" />
    <rect y="46" width="2560" height="194" filter="url(#speck)" opacity=".6" />
    <rect y="70" width="2560" height="50" fill="url(#glow)" />
    <g clipPath="url(#redShape)">
      <rect y="60" width="2560" height="94" fill="url(#band)" />
      <rect y="60" width="2560" height="88" filter="url(#shade)" opacity=".45" />
    </g>
    <path d="M0 119.500H144M628 119.500H2560" stroke="#b98080" strokeWidth="1.200" />
  </Texture>
);

const messages = [
  { n: "1.", type: "date", loc: "From line 116, column 29; to line 116, column 64", code: `<input type="date" name="brthdate"/>` },
  { n: "2.", type: "color", loc: "From line 117, column 29; to line 117, column 63", code: `<input type="color"  name="color"/>` },
];

export default function App() {
  return (
    <Desktop>
      <Global />
      <svg width="0" height="0">
        <defs>
          <Gradient id="gFinder" a="#2fd0fb" b="#1f6ff0" />
          <Gradient id="gSafari" a="#1a9df0" b="#1d60df" />
          <Gradient id="gSky" a="#2a78d8" b="#7cc0f2" />
          <Gradient id="gSilver" a="#cfdbe2" b="#7f8385" />
          <Gradient id="gPy" a="#3b76ab" b="#f2c234" mid />
          <Gradient id="gMsg" a="#6cc8fb" b="#1a8bf5" />
          <Gradient id="gGreen" a="#4ee070" b="#1fc030" />
          <Gradient id="gOrange" a="#f9a62c" b="#e2501a" />
          <Gradient id="gTunes" a="#fb5252" b="#5a8cf8" />
          <Gradient id="gTunes2" a="#f5536b" b="#3d8cf0" />
          <Gradient id="gStore" a="#1fc0fb" b="#1b68ee" />
          <Gradient id="gPref" a="#bccbd6" b="#66696c" />
          <Gradient id="gCam" a="#a5e87c" b="#2fa02a" />
        </defs>
      </svg>

      <MenuBar>
        <AppleMark><FaApple size={34} viewBox="64 0 384 512" /></AppleMark>
        <MenuItem $w={146} $ls={0.9} $bold>Chrome</MenuItem>
        <MenuItem $w={81} $ls={0.3}>File</MenuItem>
        <MenuItem $w={88} $ls={0.5}>Edit</MenuItem>
        <MenuItem $w={98} $ls={-0.1}>View</MenuItem>
        <MenuItem $w={130} $ls={0.3}>History</MenuItem>
        <MenuItem $w={180} $ls={0.24}>Bookmarks</MenuItem>
        <MenuItem $w={127} $ls={0.58}>People</MenuItem>
        <MenuItem $w={138} $ls={-0.26}>Window</MenuItem>
        <MenuItem $w={70} $ls={0.55}>Help</MenuItem>
        <StatusArea>
          <Status $gap={0} $w={36}>
            <svg width="36" height="44" viewBox="1806 0 36 44" fill="#26363a">
              <path d="M1815 9Q1821 9 1824 13Q1827 9 1833 9Q1842 10 1842 19Q1842 25 1829 35V25H1828V20H1820V25H1819V35Q1806 25 1806 19Q1806 10 1815 9z" />
              <path d="M1817.500 14q-3 4 0 9M1830.500 14q3 4 0 9M1813 12.500q-4.500 6 0 13M1835 12.500q4.500 6 0 13" fill="none" stroke="#d9e6e8" strokeWidth="1.800" />
              <circle cx="1824" cy="18.500" r="3.600" fill="#26363a" stroke="#d9e6e8" strokeWidth="1.600" />
              <path d="M1821 25h6v10h-6z" fill="#d9e6e8" />
            </svg>
          </Status>
          <Status $gap={20} $w={30}>
            <svg width="30" height="44" viewBox="1862 0 30 44" fill="#111">
              <path d="M1870 5L1873 7Q1881 4 1884 13Q1886 22 1884 32H1870Q1870 27 1876 23L1875 21Q1870 21 1867 25L1863 23L1863 20L1869 11z" />
              <path d="M1879 5Q1890 8 1889.500 20L1887.500 29" fill="none" stroke="#111" strokeWidth="3.200" strokeDasharray="2.600 1" />
              <path d="M1871 33.500H1884L1886 39H1869z" />
            </svg>
          </Status>
          <Status $gap={28} $w={36}>
            <svg width="36" height="44" viewBox="1920 0 36 44" fill="none" stroke="#26363a" strokeWidth="2.200">
              <path d="M1928 27H1921.200V9H1955V27H1948" />
              <path d="M1938 22.500L1949 36H1927z" fill="#26363a" stroke="none" />
            </svg>
          </Status>
          <Status $gap={24} $w={17}>
            <svg width="17" height="44" viewBox="1980 0 17 44" fill="#26363a">
              <path d="M1980 17H1987L1996 10V34L1987 27.500H1980z" />
            </svg>
          </Status>
          <Status $gap={41} $w={41}>
            <svg width="41" height="44" viewBox="2038 0 41 44" fill="none" stroke="#26363a" strokeWidth="2.800">
              <path d="M2039.500 15.500A27.500 27.500 0 0 1 2078 15.500M2045.300 21.300A19 19 0 0 1 2072 21.300M2051 27A11 11 0 0 1 2066.300 27" />
              <path d="M2058.700 35.500l-4-4.200a5.600 5.600 0 0 1 8 0z" fill="#26363a" stroke="none" />
            </svg>
          </Status>
          <StatusText $gap={23} $w={48} $size={23} $ls={-0.7}>52%</StatusText>
          <Status $gap={8} $w={46}>
            <svg width="46" height="44" viewBox="2158 0 46 44" fill="none" stroke="#26363a" strokeWidth="2">
              <rect x="2159.500" y="11" width="38.500" height="22" rx="3.500" />
              <rect x="2162" y="14" width="17" height="16" fill="#26363a" stroke="none" />
              <path d="M2200.500 18Q2203.500 19 2203.500 22T2200.500 26z" fill="#26363a" stroke="none" />
            </svg>
          </Status>
          <StatusText $gap={30} $w={148} $size={27} $ls={0.4}>Fri 7:49 PM</StatusText>
          <Status $gap={36} $w={28}>
            <svg width="28" height="44" viewBox="2418 0 28 44" fill="none" stroke="#26363a" strokeWidth="2.400">
              <circle cx="2429" cy="19" r="9.600" />
              <path d="M2435.500 26L2446 36" strokeWidth="3" />
            </svg>
          </Status>
          <Status $gap={31} $w={37}>
            <svg width="37" height="44" viewBox="2477 0 37 44" stroke="#26363a" strokeWidth="3.400">
              <path d="M2477.500 14h3.500M2477.500 22h3.500M2477.500 30.500h3.500M2485.500 14H2514M2485.500 22H2508M2485.500 30.500H2514" />
            </svg>
          </Status>
        </StatusArea>
      </MenuBar>

      <Window>
        <Chrome>
          <ThemeTexture />
          <TabStrip>
            <Lights>
              <Light $c="#ff5f58" />
              <Light $c="#ffbe3e" />
              <Light $c="#2fcb47" />
            </Lights>
            <Tab>
              <Favicon>
                <svg width="28" height="30" viewBox="0 0 28 30">
                  <path d="M1 0H9L14 17L20 0H27L16 30H12z" fill="#262a6c" />
                  <path d="M2 20V11M2 11H10.500V20M16.500 10V19.500H25.500M25.500 10V20" fill="none" stroke="#15153a" strokeWidth="5" />
                  <path d="M2 20V10M2 11H10.500V20M16.500 10V19.500H25.500M25.500 10V20.500" fill="none" stroke="#fff" strokeWidth="2.400" />
                </svg>
              </Favicon>
              <TabTitle>Showing results for pa2B.html</TabTitle>
              <svg width="15" height="15" viewBox="0 0 15 15" stroke="#e6cfcf" strokeWidth="2.200">
                <path d="M1 1L14 14M14 1L1 14" />
              </svg>
            </Tab>
            <NewTab>
              <svg width="66" height="31" viewBox="0 0 66 31"><path d="M3 0H54Q57 0 58 3L65 27Q66 30.500 62 30.500H15Q11 30.500 9.500 27L1 4Q0 0 3 0z" fill="#000" /></svg>
            </NewTab>
            <Profile>Biniam</Profile>
          </TabStrip>
          <Toolbar>
            <ToolIcon $gap={20} $w={32}>
              <svg width="32" height="30" viewBox="20 141 32 30" fill="none" stroke="#e2d3d3" strokeWidth="3"><path d="M49 156H25M36 144.500L24.500 156L36 167.500" /></svg>
            </ToolIcon>
            <ToolIcon $gap={25} $w={32} $dim>
              <svg width="32" height="30" viewBox="77 141 32 30" fill="none" stroke="#e2d3d3" strokeWidth="3"><path d="M80 156H104M93 144.500L104.500 156L93 167.500" /></svg>
            </ToolIcon>
            <ToolIcon $gap={23} $w={33}>
              <svg width="33" height="30" viewBox="132 141 33 30" fill="none" stroke="#e2d3d3" strokeWidth="3"><path d="M158.500 149A12 12 0 1 0 159.500 160.500" /><path d="M162 143.500V154.500H151z" fill="#e2d3d3" stroke="none" /></svg>
            </ToolIcon>
            <ToolIcon $gap={23} $w={32}>
              <svg width="32" height="30" viewBox="188 141 32 30" fill="none" stroke="#e2d3d3" strokeWidth="2.800"><path d="M204 144.500L192.500 156.500H197V168H211V156.500H215.500z" /></svg>
            </ToolIcon>
            <Omnibox>
              <svg width="17" height="22" viewBox="0 0 17 22"><rect y="8.500" width="17" height="13.500" rx="1.800" fill="#188045" /><path d="M4 9V6A4.500 4.500 0 0 1 13 6V9" fill="none" stroke="#188045" strokeWidth="2.500" /></svg>
              <Url>
                <UrlPart $c="#188045" $ls={0.4}>https</UrlPart>
                <UrlPart $ls={0.2}>://</UrlPart>
                <UrlPart $c="#000" $ls={0.01}>validator.w3.org</UrlPart>
                <UrlPart $ls={0.2}>/nu/#file</UrlPart>
              </Url>
              <svg width="30" height="28" viewBox="0 0 30 28"><path d="M15 2.500L18.400 10.500L27.300 11.300L20.600 17L22.600 25.500L15 21L7.400 25.500L9.400 17L2.700 11.300L11.600 10.500z" fill="none" stroke="#767676" strokeWidth="2.400" /></svg>
            </Omnibox>
            <ToolIcon $gap={21} $w={33}>
              <svg width="33" height="32" viewBox="0 0 33 32">
                <path d="M10 0H22.500L32 9.500V22.500L22.500 32H10L.5 22.500V9.500z" fill="#fff" />
                <path d="M10.600 1.500H21.900L30.500 10V22L21.900 30.500H10.600L2 22V10z" fill="#e5322c" />
                <path d="M9 18V8.500a1.400 1.400 0 0 1 2.800 0V5.500a1.500 1.500 0 0 1 3 0V4.500a1.500 1.500 0 0 1 3 0V6a1.400 1.400 0 0 1 2.800 0V17l2.400-2.600a1.700 1.700 0 0 1 2.700 2Q22 27.500 16.500 28Q9 28 9 18z" fill="#f6eceb" />
              </svg>
            </ToolIcon>
            <ToolIcon $gap={23} $w={32}>
              <svg width="32" height="32" viewBox="0 0 32 32"><rect width="32" height="32" rx="2.500" fill="#e8931c" /><rect x="1.500" y="1.500" width="29" height="29" rx="1.500" fill="#fbb829" /><path d="M11 6.500H21V9H11zM11 11H21V13.500H11zM11 15.500H21V18.500H26L16 29L6.500 18.500H11z" fill="#2d2d2d" /></svg>
            </ToolIcon>
            <ToolIcon $gap={24} $w={32}>
              <svg width="32" height="28" viewBox="0 0 32 28"><path d="M4 4H8V5.500H10L12 1Q12.500 0 14 0H19Q20.500 0 21 1L23 5.500H28Q31 5.500 31 8.500V23.500Q31 26.500 28 26.500H4Q1 26.500 1 23.500V8.500Q1 5.500 3 5.500z" fill="#a6a4a4" /><circle cx="16" cy="15" r="7" fill="#fff" /><circle cx="16" cy="15" r="3.800" fill="#a6a4a4" /></svg>
            </ToolIcon>
            <ToolIcon $gap={36} $w={8}>
              <svg width="8" height="28" viewBox="0 0 8 28" fill="#e2d3d3"><circle cx="4" cy="4" r="3.200" /><circle cx="4" cy="14" r="3.200" /><circle cx="4" cy="24" r="3.200" /></svg>
            </ToolIcon>
          </Toolbar>
          <Bookmarks>
            <Bookmark $gap={26} $w={96}>
              <svg width="27" height="27" viewBox="0 0 27 27">
                {["#ea4335", "#ea4335", "#ea4335", "#34a853", "#4285f4", "#f9a825", "#34a853", "#f9a825", "#f9a825"].map((c, i) => (
                  <rect key={i} x={(i % 3) * 10} y={Math.floor(i / 3) * 10} width="6.500" height="6.500" fill={c} />
                ))}
              </svg>
              <BookmarkText $ls={-0.8} $w={60}>Apps</BookmarkText>
            </Bookmark>
            <Bookmark $gap={17} $w={102}>
              <svg width="32" height="32" viewBox="0 0 32 32"><rect width="32" height="32" fill="#0b1418" /><path d="M9 4H23V9.500H19V26H13V9.500H9z" fill="#e8f4f6" /></svg>
              <BookmarkText $ls={-0.57} $w={63}>tokyo</BookmarkText>
            </Bookmark>
            <Bookmark $gap={20} $w={76}>
              <svg width="32" height="32" viewBox="0 0 32 32"><path d="M0 0H15V15H0z" fill="#f25022" /><path d="M17 0H32V15H17z" fill="#7fba00" /><path d="M0 17H15V32H0z" fill="#00a4ef" /><path d="M17 17H32V32H17z" fill="#ffb900" /></svg>
              <BookmarkText $ls={0} $w={37}>ptk</BookmarkText>
            </Bookmark>
            <Bookmark $gap={20} $w={131}>
              <svg width="26" height="30" viewBox="0 0 26 30"><path d="M1 1H25L24 20H3z" fill="#cfd8dd" /><path d="M2.500 2.500H23.500L22.500 18.500H4z" fill="#64aee6" /><path d="M2.500 2.500H23.500L4 16z" fill="#9ccff2" /><path d="M10 20h7v4h4v4q-8 2-15 0v-4h4z" fill="#5d5f61" /></svg>
              <BookmarkText $ls={-0.22} $w={94}>feed2all</BookmarkText>
            </Bookmark>
            <Bookmark $gap={26} $w={285}>
              <svg width="18" height="26" viewBox="0 0 18 26" fill="none" stroke="#e8e2e2" strokeWidth="2"><path d="M1 1.500H11L17 8V24.500H1zM10.500 1.500V8.500H17" /></svg>
              <BookmarkText $ls={-0.48} $w={253}>Fundamentals of we...</BookmarkText>
            </Bookmark>
            <Bookmark $gap={15} $w={200}>
              <svg width="32" height="32" viewBox="0 0 32 32" fill="#1c5b74"><path d="M0 0H8L15 13z" /><path d="M22 13L24 19.500L31 19L26 23.500L29 31L22 26.500L15 30L17.500 23L13 18.500L20 19z" /></svg>
              <BookmarkText $ls={-0.2} $w={160}>smartthinking</BookmarkText>
            </Bookmark>
            <Bookmark $gap={18} $w={294}>
              <svg width="32" height="28" viewBox="0 0 32 28"><path d="M11 0L16 9L5.500 28L0 18.500z" fill="#23a566" /><path d="M11 0H21L32 18.500H22z" fill="#fcc934" /><path d="M11 18.500H32L26.500 28H5.500z" fill="#4285f4" /></svg>
              <BookmarkText $ls={-0.38} $w={254}>Phi Theta Kappa - G...</BookmarkText>
            </Bookmark>
            <Bookmark $gap={15} $w={153}>
              <svg width="32" height="32" viewBox="0 0 32 32"><rect width="32" height="32" rx="3" fill="#fff" /><text x="3" y="24.500" fontFamily={HELV} fontSize="25" fontWeight="700" fill="#1a5fa8" textLength="26" lengthAdjust="spacingAndGlyphs">W3</text></svg>
              <BookmarkText $ls={-0.53} $w={114}>testHTML</BookmarkText>
            </Bookmark>
          </Bookmarks>
        </Chrome>
        <Tooltip>HTML Input Types</Tooltip>

        <Page>
          <Banner>Nu Html Checker</Banner>
          <Notice>This tool is an ongoing experiment in better HTML checking, and its behavior remains subject to change</Notice>
          <ResultTitle>Showing results for pa2B.html</ResultTitle>
          <InputSet>
            <Legend>Checker Input</Legend>
            <Row>
              <RowLabel $w={74} $lh={37} $ls={-0.9}>Show</RowLabel>
              <CheckGroup>
                <CheckLabel><Box />source</CheckLabel>
                <CheckLabel><Box />outline</CheckLabel>
                <CheckLabel><Box />image report</CheckLabel>
              </CheckGroup>
              <Button $w={128} $ml={21} $mt={2}>Options...</Button>
            </Row>
            <Row $mt={24}>
              <RowLabel $w={122} $lh={33} $ls={-0.15}>Check by</RowLabel>
              <Select>
                file upload
                <Stepper>
                  <svg width="29" height="35" viewBox="0 0 29 35" fill="none" stroke="#fff" strokeWidth="2.800" strokeLinecap="round" strokeLinejoin="round"><path d="M9.500 13.500L14.500 8L19.500 13.500M9.500 20.500L14.500 26L19.500 20.500" /></svg>
                </Stepper>
              </Select>
              <Button $w={150} $ml={16}>Choose File</Button>
              <NoFile>No file chosen</NoFile>
            </Row>
            <Hint>Uploaded files with xhtml or .xht extensions are automatically processed as XHTML.</Hint>
            <Button $w={96}>Check</Button>
          </InputSet>
          <FilterHint>Use the Message Filtering button below to hide/show particular messages, and to see total counts of errors and warnings.</FilterHint>
          <FocusRing><FilterButton>Message Filtering</FilterButton></FocusRing>
          <Results>
            {messages.map((m) => (
              <ResultItem key={m.n}>
                <Num>{m.n}</Num>
                <Card>
                  <TitleRow>
                    <Badge>Warning</Badge>
                    The
                    <CodeBox>{m.type}</CodeBox>
                    <TitleRest>input type is not supported in all browsers. Please be sure to test, and consider using a polyfill.</TitleRest>
                  </TitleRow>
                  <Location>{m.loc}</Location>
                  <Extract>
                    {"<td>"}
                    <Mark>{m.code}</Mark>
                    {"</td>"}
                    <Newline>
                      <svg width="28" height="22" viewBox="0 0 28 22"><path d="M22 1.500Q27 5 24.500 11Q23 14.500 18 14.500H9" fill="none" stroke="#222" strokeWidth="2.200" /><path d="M2.500 14.500L10 8V21z" fill="#222" /></svg>
                    </Newline>
                  </Extract>
                </Card>
              </ResultItem>
            ))}
          </Results>
        </Page>
      </Window>

      <Dock>
        {dockIcons.map((icon, i) => (
          <Slot key={i}>
            <svg width="61" height="62" viewBox="0 0 61 62">{icon.d}</svg>
            {icon.run && <Running />}
            {icon.count && <Count>{icon.count}</Count>}
          </Slot>
        ))}
        <Divider />
        {thumbs.map((t, i) => (
          <Slot key={i}>
            <svg width="61" height="62" viewBox="0 0 61 62">{t}</svg>
          </Slot>
        ))}
      </Dock>
    </Desktop>
  );
}
